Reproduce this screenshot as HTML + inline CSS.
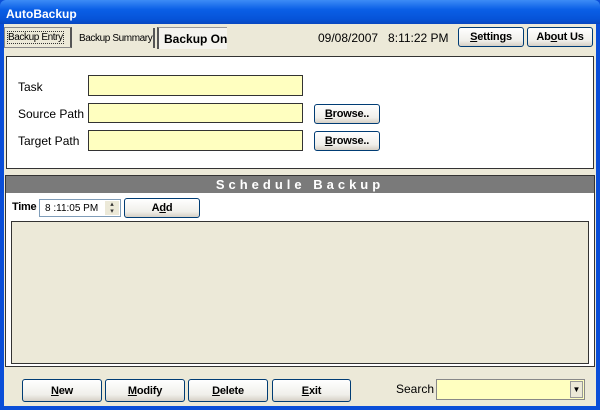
<!DOCTYPE html>
<html><head><style>
*{margin:0;padding:0;box-sizing:border-box}
body{width:600px;height:410px;overflow:hidden;font-family:"Liberation Sans",sans-serif;font-size:12px;position:relative;background:#0A4ED8}
.a{position:absolute;white-space:nowrap}
.title{left:0;top:0;width:600px;height:24px;background:linear-gradient(#3D8CF6,#0A5FE6 40%,#0653D8 80%,#0847C0);color:#fff;font-weight:bold;font-size:12px;padding:7px 0 0 6px;border-radius:6px 6px 0 0}
.body{left:4px;top:24px;width:592px;height:382px;background:#ECE9D8}
.btn{position:absolute;white-space:nowrap;border:1px solid #003C74;border-radius:3px;background:linear-gradient(#fff,#F0EFEA 70%,#D6D0C5);text-align:center;font-weight:bold;font-size:11px;color:#000;letter-spacing:-0.2px}
.inp{position:absolute;background:#FFFFC0;border:1px solid #333;}
.lbl{position:absolute;font-size:12px;white-space:nowrap}
u{text-decoration:underline}
</style></head><body>
<div class="a title">AutoBackup</div>
<div class="a body"></div>
<div class="a" style="left:4px;top:27px;width:68px;height:21px;border:1px solid #888;border-right:2px solid #555;background:#ECE9D8;font-size:10px;letter-spacing:-0.4px;padding:4px 0 0 3px"><span style="outline:1px dotted #333">Backup Entry</span></div>
<div class="a" style="left:75px;top:28px;width:80px;height:20px;border-right:2px solid #555;font-size:10px;letter-spacing:-0.4px;padding:5px 0 0 4px">Backup Summary</div>
<div class="a" style="left:157px;top:27px;width:70px;height:22px;border-left:2px solid #555;border-top:1px solid #999;background:#F4F3EE;font-size:12px;font-weight:bold;padding:4px 0 0 5px">Backup On</div>
<div class="lbl" style="left:318px;top:31px">09/08/2007&nbsp;&nbsp;&nbsp;8:11:22 PM</div>
<div class="btn" style="left:458px;top:27px;width:66px;height:20px;padding-top:3px"><u>S</u>ettings</div>
<div class="btn" style="left:527px;top:27px;width:66px;height:20px;padding-top:3px">Ab<u>o</u>ut Us</div>
<div class="a" style="left:6px;top:56px;width:588px;height:113px;background:#fff;border:1px solid #333"></div>
<div class="lbl" style="left:18px;top:80px">Task</div>
<div class="lbl" style="left:18px;top:107px">Source Path</div>
<div class="lbl" style="left:18px;top:134px">Target Path</div>
<div class="inp" style="left:88px;top:75px;width:215px;height:21px"></div>
<div class="inp" style="left:88px;top:103px;width:215px;height:20px"></div>
<div class="inp" style="left:88px;top:130px;width:215px;height:21px"></div>
<div class="btn" style="left:314px;top:104px;width:66px;height:20px;padding-top:3px"><u>B</u>rowse..</div>
<div class="btn" style="left:314px;top:131px;width:66px;height:20px;padding-top:3px"><u>B</u>rowse..</div>
<div class="a" style="left:5px;top:175px;width:590px;height:192px;background:#fff;border:1px solid #333"></div>
<div class="a" style="left:6px;top:176px;width:588px;height:17px;background:#7A7A7A;color:#fff;font-weight:bold;font-size:13px;letter-spacing:4px;text-align:center;line-height:17px">Schedule Backup</div>
<div class="lbl" style="left:12px;top:201px;font-weight:bold;font-size:11px;letter-spacing:-0.3px">Time</div>
<div class="a" style="left:39px;top:199px;width:82px;height:18px;border:1px solid #7F9DB9;background:#fff;font-size:10px;padding:3px 0 0 5px">8 :11:05 PM</div>
<div class="a" style="left:105px;top:201px;width:14px;height:14px;font-size:7px;line-height:7px;text-align:center;color:#333;background:#ECE9D8">▴<br>▾</div>
<div class="btn" style="left:124px;top:198px;width:76px;height:20px;padding-top:3px">A<u>d</u>d</div>
<div class="a" style="left:11px;top:221px;width:578px;height:143px;background:#ECE9D8;border:1px solid #333"></div>
<div class="btn" style="left:22px;top:379px;width:80px;height:23px;padding-top:5px"><u>N</u>ew</div>
<div class="btn" style="left:105px;top:379px;width:80px;height:23px;padding-top:5px"><u>M</u>odify</div>
<div class="btn" style="left:188px;top:379px;width:80px;height:23px;padding-top:5px"><u>D</u>elete</div>
<div class="btn" style="left:272px;top:379px;width:79px;height:23px;padding-top:5px"><u>E</u>xit</div>
<div class="lbl" style="left:396px;top:382px">Search</div>
<div class="inp" style="left:436px;top:379px;width:149px;height:21px;border-color:#888"></div>
<div class="a" style="left:570px;top:381px;width:13px;height:17px;background:#ECE9D8;border:1px solid #999;font-size:8px;text-align:center;line-height:16px">▼</div>
</body></html>
